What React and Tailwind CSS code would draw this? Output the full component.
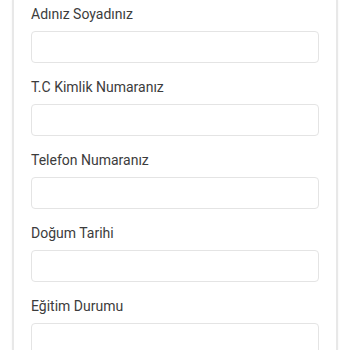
const fields = ["Adınız Soyadınız", "T.C Kimlik Numaranız", "Telefon Numaranız", "Doğum Tarihi", "Eğitim Durumu"]

const App = () => {
  return (
    <div className="w-[350px] h-[350px] overflow-hidden bg-white" style={{ fontFamily: "Roboto, 'Liberation Sans', sans-serif" }}>
      <div className="mx-[12px] h-full border-x-2 border-[#e8e8e8] bg-white px-[17px] pt-[3px] shadow-[0_0_2px_rgba(0,0,0,0.06)]">
        {fields.map((label) => (
          <div key={label} className="mb-[13px]">
            <label className="block text-[14px] font-normal leading-[22px] text-[#3c3c3c]">{label}</label>
            <input
              type="text"
              className="mt-[6px] block h-[32px] w-full rounded-[4px] border border-[#e4e4e4] bg-white outline-none"
            />
          </div>
        ))}
      </div>
    </div>
  )
}

export default App
